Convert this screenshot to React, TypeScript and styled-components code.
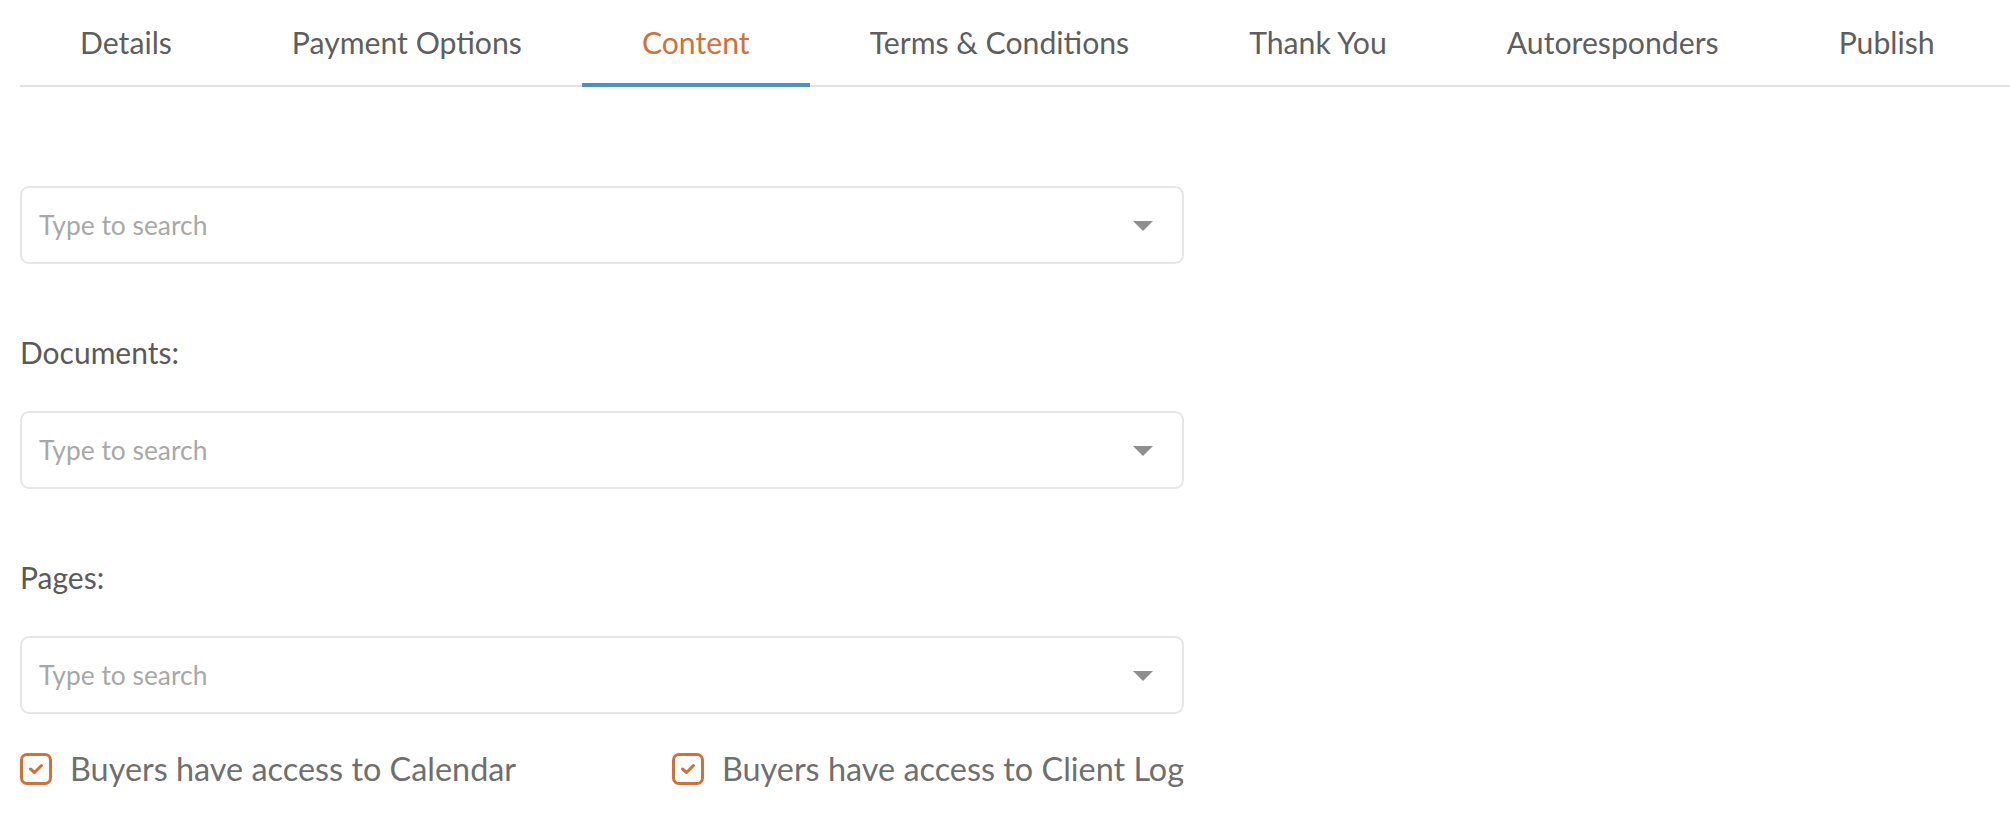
import React from 'react';
import styled, { createGlobalStyle } from 'styled-components';

const GlobalStyle = createGlobalStyle`
  html, body {
    margin: 0;
    padding: 0;
    background: #ffffff;
  }
  body {
    font-family: Lato, 'Open Sans', 'Liberation Sans', sans-serif;
  }
`;

const Page = styled.div`
  padding: 0 0 0 20px;
`;

const TabBar = styled.nav`
  display: flex;
  border-bottom: 2px solid #e2e2e2;
`;

const Tab = styled.div<{ $active?: boolean }>`
  display: flex;
  align-items: center;
  justify-content: center;
  height: 83px;
  padding: 0 60px;
  margin-bottom: -2px;
  font-size: 30.2px;
  color: ${p => (p.$active ? '#d2703a' : '#5e5e5e')};
  border-bottom: 4px solid ${p => (p.$active ? '#4a8fd6' : 'transparent')};
  white-space: nowrap;
  cursor: pointer;
`;

const Form = styled.div`
  width: 1164px;
  display: flex;
  flex-direction: column;
  padding-top: 99px;
`;

const Field = styled.div<{ $first?: boolean }>`
  display: flex;
  flex-direction: column;
  margin-top: ${p => (p.$first ? 0 : 68)}px;
`;

const Label = styled.label`
  font-size: 30px;
  line-height: 40px;
  color: #5a5a5a;
  margin-bottom: 39px;
`;

const SelectBox = styled.div`
  position: relative;
  box-sizing: border-box;
  height: 78px;
  border: 2px solid #e6e6e6;
  border-radius: 9px;
  display: flex;
  align-items: center;
  padding: 0 70px 0 17px;
`;

const Placeholder = styled.span`
  font-size: 26.4px;
  color: #a8a8a8;
`;

const Caret = styled.span`
  position: absolute;
  right: 29px;
  top: 33px;
  width: 0;
  height: 0;
  border-left: 10px solid transparent;
  border-right: 10px solid transparent;
  border-top: 10px solid #8e8e8e;
`;

const CheckRow = styled.div`
  display: flex;
  justify-content: space-between;
  margin-top: 36px;
`;

const CheckItem = styled.label`
  display: flex;
  align-items: center;
  gap: 18px;
  font-size: 32.4px;
  line-height: 38px;
  color: #6f6f6f;
`;

const Box = styled.span`
  box-sizing: border-box;
  flex: none;
  width: 32px;
  height: 32px;
  border: 3.5px solid #d2703a;
  border-radius: 7px;
  display: flex;
  align-items: center;
  justify-content: center;
`;

const tabs = ['Details', 'Payment Options', 'Content', 'Terms & Conditions', 'Thank You', 'Autoresponders', 'Publish'];

const Select: React.FC = () => (
  <SelectBox>
    <Placeholder>Type to search</Placeholder>
    <Caret />
  </SelectBox>
);

const Checkbox: React.FC<{ label: string }> = ({ label }) => (
  <CheckItem>
    <Box>
      <svg width="16" height="12" viewBox="0 0 16 12">
        <polyline points="2.5,6 6.5,9.5 13.5,2.5" fill="none" stroke="#d2703a" strokeWidth="3" strokeLinecap="round" strokeLinejoin="round" />
      </svg>
    </Box>
    {label}
  </CheckItem>
);

const App: React.FC = () => {
  return (
    <>
      <GlobalStyle />
      <Page>
        <TabBar>
          {tabs.map(t => (
            <Tab key={t} $active={t === 'Content'}>{t}</Tab>
          ))}
        </TabBar>
        <Form>
          <Field $first>
            <Select />
          </Field>
          <Field>
            <Label>Documents:</Label>
            <Select />
          </Field>
          <Field>
            <Label>Pages:</Label>
            <Select />
          </Field>
          <CheckRow>
            <Checkbox label="Buyers have access to Calendar" />
            <Checkbox label="Buyers have access to Client Log" />
          </CheckRow>
        </Form>
      </Page>
    </>
  );
};

export default App;
